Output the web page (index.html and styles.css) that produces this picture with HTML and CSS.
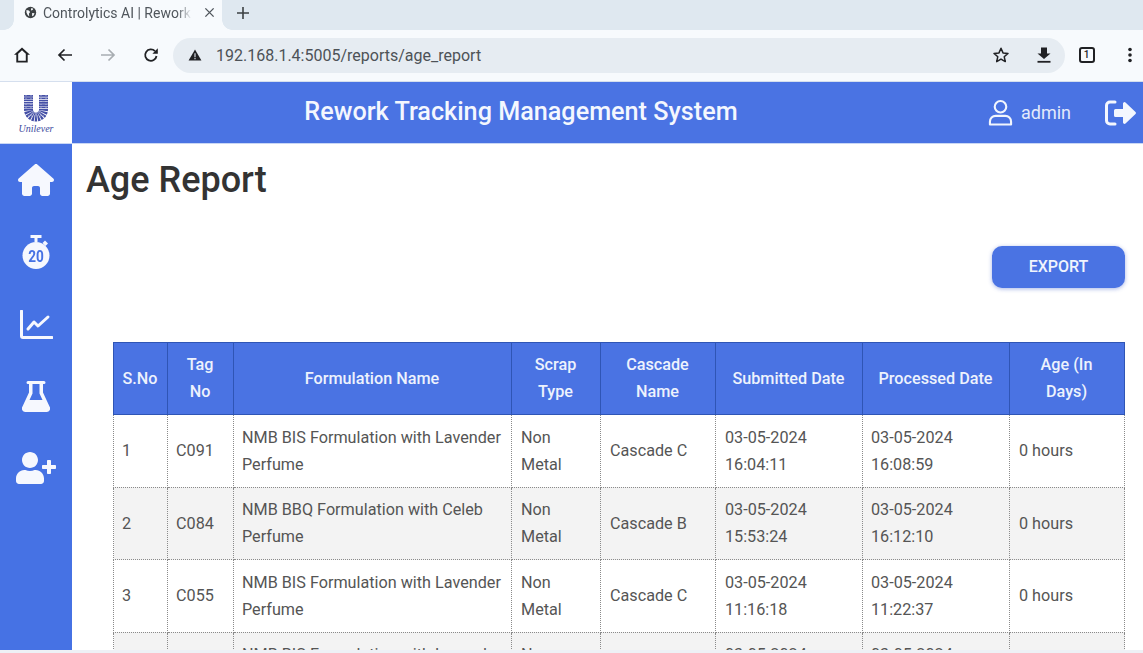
FILE: index.html
```html
<!DOCTYPE html>
<html lang="en">
<head>
<meta charset="utf-8">
<title>Controlytics AI | Rework Management</title>
<link rel="stylesheet" href="styles.css">
</head>
<body>
<div class="browser">
  <div class="tabstrip">
    <div class="tab">
      <svg class="favicon" viewBox="0 0 16 16"><circle cx="8" cy="8" r="7" fill="#3c4043"/><path d="M3 5l3 .5 1.500 2L6 9.500l.5 3.500-2-2L3 8zM9 2.500l2.500 1-1 1.500-2 .5zM10 8.500l3 .5-1.500 3-1.500.5z" fill="#f7fafd"/></svg>
      <span class="tab-title">Controlytics AI | Rework Management</span>
      <svg class="tab-close" viewBox="0 0 12 12"><path d="M1.500 1.500l9 9M10.500 1.500l-9 9" stroke="#50565c" stroke-width="1.500" fill="none"/></svg>
    </div>
    <svg class="new-tab" viewBox="0 0 14 14"><path d="M7 1v12M1 7h12" stroke="#3c4043" stroke-width="1.600" fill="none"/></svg>
  </div>
  <div class="toolbar">
    <span class="slot"><svg class="tb-icon" viewBox="0 0 18 18"><path d="M9 1.500L1 8.800h2.300V16.500h11.400V8.800H17zM5.200 14.700V7.700L9 4.200l3.800 3.500v7z" fill="#202124" fill-rule="evenodd"/></svg></span>
    <span class="slot"><svg class="tb-icon" viewBox="0 0 18 18"><path d="M16 9H3M8.500 3.500L3 9l5.500 5.500" stroke="#202124" stroke-width="1.700" fill="none"/></svg></span>
    <span class="slot"><svg class="tb-icon" viewBox="0 0 18 18"><path d="M2 9h13M9.500 3.500L15 9l-5.500 5.500" stroke="#a8adb2" stroke-width="1.700" fill="none"/></svg></span>
    <span class="slot"><svg class="tb-icon" viewBox="0 0 18 18"><path d="M14.500 10a5.700 5.700 0 1 1-1.500-4.800" stroke="#202124" stroke-width="1.800" fill="none"/><path d="M15.800 2.300v5.400h-5.400z" fill="#202124"/></svg></span>
    <div class="omnibox">
      <svg class="warn" viewBox="0 0 16 14"><path d="M8 0.500L15.500 13.500H.5z" fill="#202124"/><path d="M8 5v4.500M8 10.500v1.500" stroke="#e6ecf2" stroke-width="1.300"/></svg>
      <span class="url">192.168.1.4:5005/reports/age_report</span>
      <span class="slot"><svg class="tb-icon" viewBox="0 0 18 18"><path d="M9 2.300l2 4.600 5 .5-3.800 3.300 1.100 4.900L9 13.100l-4.300 2.500 1.100-4.900L2 7.400l5-.5z" fill="none" stroke="#202124" stroke-width="1.500" stroke-linejoin="round"/></svg></span>
      <span class="slot"><svg class="tb-icon" viewBox="0 0 18 18"><path d="M6 1.500h6v6h3.500L9 13 2.500 7.500H6z" fill="#202124"/><path d="M2.500 15.800h13" stroke="#202124" stroke-width="1.800"/></svg></span>
    </div>
    <span class="slot"><span class="tab-count">1</span></span>
    <span class="slot"><svg class="tb-menu" viewBox="0 0 6 18"><circle cx="3" cy="3.500" r="1.800" fill="#202124"/><circle cx="3" cy="9" r="1.800" fill="#202124"/><circle cx="3" cy="14.500" r="1.800" fill="#202124"/></svg></span>
  </div>
</div>

<header class="topbar">
  <div class="logo">
    <svg class="logo-u" viewBox="0 0 28 28"><path d="M6.500 1v14.500a7.500 7.500 0 0 0 15 0V1" fill="none" stroke="#444fa6" stroke-width="9" stroke-dasharray="1.700 .6"/><path d="M4 1v15M9 1v15M19 1v15M24 1v15M6 22l16 0" fill="none" stroke="#fff" stroke-width=".5" stroke-dasharray="1 2"/></svg>
    <span class="logo-text">Unilever</span>
  </div>
  <div class="app-title">Rework Tracking Management System</div>
  <div class="user">
    <svg class="user-icon" viewBox="0 0 26 28"><circle cx="13" cy="8" r="6" fill="none" stroke="#f1f5fd" stroke-width="2.200"/><path d="M2 26.500v-3a6 6 0 0 1 6-6h10a6 6 0 0 1 6 6v3z" fill="none" stroke="#f1f5fd" stroke-width="2.200" stroke-linejoin="round"/></svg>
    <span class="user-name">admin</span>
  </div>
  <svg class="logout" viewBox="0 0 32 28"><path d="M11 3H6a3.500 3.500 0 0 0-3.500 3.500v15A3.500 3.500 0 0 0 6 25h5" fill="none" stroke="#f4f7fe" stroke-width="3" stroke-linecap="round"/><path d="M19 4.500a1.500 1.500 0 0 1 2.500-1l10 9.500a1.500 1.500 0 0 1 0 2l-10 9.500a1.500 1.500 0 0 1-2.500-1V18h-7.500A1.500 1.500 0 0 1 10 16.500v-5A1.500 1.500 0 0 1 11.500 10H19z" fill="#f4f7fe"/></svg>
</header>

<div class="app">
  <nav class="sidebar">
    <a class="nav-item"><svg class="nav-home" viewBox="0 0 576 512"><path d="M575.800 255.500c0 18-15 32.100-32 32.100h-32l.7 160.200c0 2.700-.2 5.400-.5 8.100V472c0 22.100-17.900 40-40 40H456c-1.100 0-2.200 0-3.300-.1c-1.400 .1-2.800 .1-4.200 .1H416 392c-22.100 0-40-17.900-40-40V448 384c0-17.700-14.300-32-32-32H256c-17.700 0-32 14.300-32 32v64 24c0 22.100-17.900 40-40 40H160 128.100c-1.500 0-3-.1-4.500-.2c-1.200 .1-2.400 .2-3.600 .2H104c-22.100 0-40-17.900-40-40V360c0-.9 0-1.900 .1-2.800V287.600H32c-18 0-32-14-32-32.100c0-9 3-17 10-24L266.400 8c7-7 15-8 22-8s15 2 21 7L564.800 231.500c8 7 12 15 11 24z" fill="#f6f8fe"/></svg></a>
    <a class="nav-item"><span class="timer"><svg class="timer-bg" viewBox="0 0 28 34"><path d="M8.500 0h11v3h-4v4h-3V3h-4z" fill="#f6f8fe"/><path d="M23 5.500l3 3-2.500 2.500-3-3z" fill="#f6f8fe"/><circle cx="14" cy="20.500" r="13.500" fill="#f6f8fe"/></svg><span class="timer-num">20</span></span></a>
    <a class="nav-item"><svg class="nav-chart" viewBox="0 0 33 29"><path d="M1.500 1v25a1.500 1.500 0 0 0 1.500 1.500h29" fill="none" stroke="#f6f8fe" stroke-width="3" stroke-linecap="round"/><path d="M8 19l6-7 4 4 10-9" fill="none" stroke="#f6f8fe" stroke-width="3" stroke-linejoin="round" stroke-linecap="round"/></svg></a>
    <a class="nav-item"><svg class="nav-flask" viewBox="0 0 28 32"><path d="M6 1h16a1.500 1.500 0 0 1 0 3h-1v8.500l6.500 14A3.500 3.500 0 0 1 24.500 32h-21A3.500 3.500 0 0 1 .5 26.500L7 12.500V4H6a1.500 1.500 0 0 1 0-3zM10.500 4v9.500L7.500 20h13l-3-6.500V4z" fill="#f6f8fe" fill-rule="evenodd"/></svg></a>
    <a class="nav-item"><svg class="nav-user" viewBox="0 0 640 512"><path d="M624 208h-64v-64c0-8.800-7.200-16-16-16h-32c-8.800 0-16 7.200-16 16v64h-64c-8.800 0-16 7.200-16 16v32c0 8.800 7.200 16 16 16h64v64c0 8.800 7.200 16 16 16h32c8.800 0 16-7.200 16-16v-64h64c8.800 0 16-7.200 16-16v-32c0-8.800-7.200-16-16-16zm-400 48c70.700 0 128-57.300 128-128S294.700 0 224 0 96 57.300 96 128s57.300 128 128 128zm89.600 32h-16.700c-22.200 10.200-46.900 16-72.900 16s-50.600-5.800-72.900-16h-16.700C60.200 288 0 348.200 0 422.400V464c0 26.500 21.500 48 48 48h352c26.500 0 48-21.500 48-48v-41.600c0-74.200-60.200-134.400-134.400-134.400z" fill="#f6f8fe"/></svg></a>
  </nav>
  <main class="content">
    <h1 class="page-title">Age Report</h1>
    <div class="actions"><button class="export">EXPORT</button></div>
    <table class="report">
      <colgroup><col class="c1"><col class="c2"><col class="c3"><col class="c4"><col class="c5"><col class="c6"><col class="c7"><col class="c8"></colgroup>
      <thead>
        <tr><th>S.No</th><th>Tag No</th><th>Formulation Name</th><th>Scrap Type</th><th>Cascade Name</th><th>Submitted Date</th><th>Processed Date</th><th>Age (In Days)</th></tr>
      </thead>
      <tbody>
        <tr><td>1</td><td>C091</td><td>NMB BIS Formulation with Lavender Perfume</td><td>Non Metal</td><td>Cascade C</td><td>03-05-2024 16:04:11</td><td>03-05-2024 16:08:59</td><td>0 hours</td></tr>
        <tr><td>2</td><td>C084</td><td>NMB BBQ Formulation with Celeb Perfume</td><td>Non Metal</td><td>Cascade B</td><td>03-05-2024 15:53:24</td><td>03-05-2024 16:12:10</td><td>0 hours</td></tr>
        <tr><td>3</td><td>C055</td><td>NMB BIS Formulation with Lavender Perfume</td><td>Non Metal</td><td>Cascade C</td><td>03-05-2024 11:16:18</td><td>03-05-2024 11:22:37</td><td>0 hours</td></tr>
        <tr><td>4</td><td>C052</td><td>NMB BIS Formulation with Lavender Perfume</td><td>Non Metal</td><td>Cascade C</td><td>03-05-2024 09:35:41</td><td>03-05-2024 09:41:12</td><td>0 hours</td></tr>
      </tbody>
    </table>
  </main>
</div>
<div class="bottom-edge"></div>
</body>
</html>
```
FILE: styles.css
```css
* { box-sizing: border-box; }
html, body { margin: 0; padding: 0; }
body {
  width: 1143px;
  height: 653px;
  overflow: hidden;
  display: flex;
  flex-direction: column;
  font-family: Roboto, "Liberation Sans", sans-serif;
  background: #fff;
}

/* Browser chrome */
.browser { height: 82px; flex: none; display: flex; flex-direction: column; border-bottom: 1px solid #d5dfee; }
.tabstrip { height: 30px; background: #dfe8f0; display: flex; align-items: center; padding-left: 14px; }
.tab {
  position: relative;
  width: 208px;
  height: 30px;
  background: #f7fafd;
  display: flex;
  align-items: center;
  padding: 0 7px 5px 10px;
  color: #50565c;
  font-size: 14px;
}
.tab::before, .tab::after {
  content: "";
  position: absolute;
  bottom: 0;
  width: 10px;
  height: 10px;
}
.tab::before { left: -10px; background: radial-gradient(circle at 0 0, transparent 9.500px, #f7fafd 10px); }
.tab::after { right: -10px; background: radial-gradient(circle at 100% 0, transparent 9.500px, #f7fafd 10px); }
.favicon { width: 13px; height: 13px; flex: none; }
.tab-title {
  margin-left: 6px;
  width: 152px;
  white-space: nowrap;
  overflow: hidden;
  -webkit-mask-image: linear-gradient(to right, #000 88%, transparent 98%);
  mask-image: linear-gradient(to right, #000 88%, transparent 98%);
  flex: none;
}
.tab-close { width: 11px; height: 11px; margin-left: 9px; flex: none; }
.new-tab { width: 14px; height: 14px; margin-left: 14px; margin-top: -5px; }
.toolbar { height: 51px; background: #f7fafd; display: flex; align-items: center; padding: 0 0 1px 0; }
.slot { width: 43px; height: 30px; display: flex; align-items: center; justify-content: center; flex: none; }
.tb-icon { width: 18px; height: 18px; }
.omnibox {
  width: 892px;
  height: 35px;
  margin-left: 1px;
  border-radius: 18px;
  background: #e6ecf2;
  display: flex;
  align-items: center;
  padding-left: 15px;
  flex: none;
}
.warn { width: 14px; height: 12px; flex: none; }
.url { margin-left: 14px; font-size: 16px; color: #4d5257; white-space: nowrap; width: 763px; flex: none; }
.tab-count {
  width: 16px;
  height: 16px;
  border: 2px solid #202124;
  border-radius: 3px;
  font-size: 10px;
  font-weight: 500;
  line-height: 12px;
  text-align: center;
  color: #202124;
}
.tb-menu { width: 6px; height: 18px; }

/* App header */
.topbar { height: 62px; flex: none; background: #4a73e3; display: flex; align-items: center; border-bottom: 1px solid #c9d7f5; }
.logo { width: 72px; height: 100%; background: #fff; display: flex; flex-direction: column; align-items: center; flex: none; padding-top: 12px; }
.logo-u { width: 28px; height: 28px; }
.logo-text { font-family: "Liberation Serif", serif; font-style: italic; font-size: 10px; line-height: 10px; color: #3c4a9e; margin-top: 2px; }
.app-title { width: 898px; text-align: center; color: #f4f7fe; font-size: 25.200px; font-weight: 500; white-space: nowrap; padding-bottom: 2px; }
.user { display: flex; align-items: center; gap: 8px; margin-left: 18px; }
.user-icon { width: 25px; height: 27px; }
.user-name { color: #e3eafb; font-size: 18px; }
.logout { width: 32px; height: 28px; margin-left: 33px; }

/* Body */
.app { display: flex; height: 506px; flex: none; overflow: hidden; }
.sidebar { width: 72px; flex: none; background: #4672e4; display: flex; flex-direction: column; }
.nav-item { height: 72px; display: flex; align-items: center; justify-content: center; flex: none; }
.nav-home { width: 36px; height: 32px; }
.timer { position: relative; width: 28px; height: 34px; display: block; }
.timer-bg { width: 28px; height: 34px; display: block; }
.timer-num { position: absolute; left: 0; right: 0; top: 12px; text-align: center; color: #4672e4; font-size: 17px; font-weight: 700; line-height: 18px; transform: scaleX(.8); }
.nav-chart { width: 33px; height: 29px; }
.nav-flask { width: 28px; height: 32px; }
.nav-user { width: 40px; height: 32px; }

.content { flex: 1; min-width: 0; padding: 0 18px 0 14px; overflow: hidden; }
.page-title { margin: 0; font-size: 36px; font-weight: 500; line-height: 72px; color: #333; }
.actions { display: flex; justify-content: flex-end; margin-top: 30px; }
.export {
  width: 133px;
  height: 42px;
  padding: 0 0 2px;
  border: 0;
  border-radius: 10px;
  background: #4a73e3;
  color: #f0f4fd;
  font-family: Roboto, sans-serif;
  font-size: 16px;
  font-weight: 500;
  box-shadow: 0 1px 4px rgba(60, 90, 200, .45);
}
.report {
  margin: 54px 0 0 27px;
  width: 1011px;
  table-layout: fixed;
  border-collapse: collapse;
  font-size: 16.200px;
  line-height: 27px;
  color: #555;
}
.c1 { width: 54px; } .c2 { width: 66px; } .c3 { width: 278px; } .c4 { width: 89px; }
.c5 { width: 115px; } .c6 { width: 147px; } .c7 { width: 147px; } .c8 { width: 115px; }
.report th {
  background: #4a73e3;
  color: #edf2fd;
  font-size: 16.200px;
  font-weight: 500;
  text-align: center;
  padding: 8px 7px 9px 6px;
  border: 1px solid #2f55b5;
}
.report th:last-child { padding: 8px 14px 9px 13px; }
.report th:nth-child(2) { padding: 8px 12px 9px 11px; }
.report td {
  padding: 8.750px 8px;
  border: 1px dotted #8a8a8a;
  vertical-align: middle;
}
.report td:nth-child(4), .report td:nth-child(5), .report td:nth-child(6), .report td:nth-child(8) { padding-left: 9px; }
.report tbody tr:nth-child(even) td { background: #f3f3f3; }
.bottom-edge { height: 3px; flex: none; background: #eef1f6; }
```
